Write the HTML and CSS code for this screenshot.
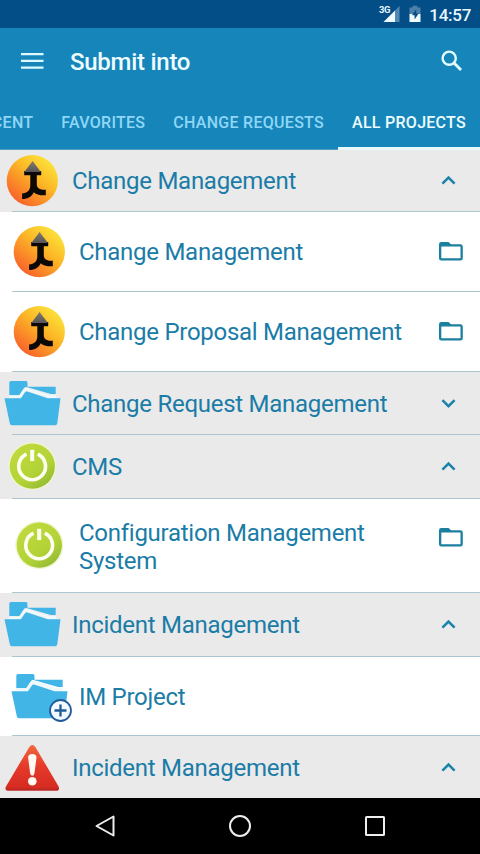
FILE: index.html
```html
<!DOCTYPE html>
<html lang="en">
<head>
<meta charset="utf-8">
<title>Submit into</title>
<link rel="stylesheet" href="styles.css">
</head>
<body>
<svg class="defs" width="0" height="0" aria-hidden="true">
  <defs>
    <linearGradient id="orange" x1=".85" y1=".1" x2=".2" y2=".9">
      <stop offset="0" stop-color="#fce33a"/><stop offset=".42" stop-color="#fcb826"/><stop offset="1" stop-color="#f8642a"/>
    </linearGradient>
    <linearGradient id="tip" x1="0" y1="0" x2="0" y2="1">
      <stop offset="0" stop-color="#85796a"/><stop offset="1" stop-color="#55565a"/>
    </linearGradient>
    <linearGradient id="green" x1=".2" y1=".1" x2=".8" y2=".9">
      <stop offset="0" stop-color="#bfd93d"/><stop offset=".65" stop-color="#b2d336"/><stop offset="1" stop-color="#97bd35"/>
    </linearGradient>
    <linearGradient id="red" x1="0" y1="0" x2="0" y2="1">
      <stop offset="0" stop-color="#f2683f"/><stop offset=".45" stop-color="#e63b2b"/><stop offset="1" stop-color="#d3291f"/>
    </linearGradient>
    <symbol id="merge" viewBox="0 0 64 64">
      <circle cx="32.300" cy="31.700" r="25.600" fill="url(#orange)"/>
      <path d="M24.200 22h17v4.300h-4.400v9.200c0 3.700 3.500 5.500 9 5.200v5.600c-5.700.3-9.500-.5-12-3-2.200 4.500-5.500 6.600-11.700 6.800v-5.600c5.300-.5 8.200-3.100 8.200-8.200V26.300h-6.100z" fill="#0b0805"/>
      <path d="M32.600 12l8.300 11H24.300z" fill="url(#tip)"/>
    </symbol>
    <symbol id="folder" viewBox="0 0 64 64">
      <path d="M9.300 23.200V10.800q0-1.700 1.700-1.700h14.800q1.700 0 1.700 1.700v4H55.700v7.200L51 22 27.500 15.200q-2.400-.7-3.800 1.200l-4.500 6.800z" fill="#42b5e7"/>
      <path d="M9 24.700h11.200l4.300-6.400q1-1.500 2.600-1l22.500 7.200h6.500" fill="none" stroke="#eff8fa" stroke-width="2.800"/>
      <path d="M4.500 26.300h16.400l4.300-6.200q.7-1 2-.6l20.500 6.800h12.800l-3.200 24.900q-.3 2-2.200 2H12q-2 0-2.200-2z" fill="#42b5e7"/>
    </symbol>
    <symbol id="power" viewBox="0 0 64 64">
      <circle cx="32.300" cy="31.200" r="24" fill="#eff5cf"/>
      <circle cx="32.300" cy="31.200" r="22.600" fill="url(#green)"/>
      <path d="M26.500 19.200a13.400 13.400 0 1 0 11.300 0" fill="none" stroke="#fdfff1" stroke-width="3.600"/>
      <path d="M32.200 14.800v11.300" fill="none" stroke="#fdfff1" stroke-width="4"/>
    </symbol>
    <symbol id="warning" viewBox="0 0 64 64">
      <path d="M29.200 11.200q3.200-4.500 6.300 0L58.600 50.500q1.500 4-2.500 4H8.500q-4.500 0-2.500-4z" fill="url(#red)"/>
      <path d="M7 53.400h50.500" stroke="#ba2925" stroke-width="2" stroke-linecap="round"/>
      <path d="M28.100 21.500q0-3.600 4.200-3.600t4.200 3.600l-2 15.500q-.3 2.700-2.200 2.700T30.100 37z" fill="#fff8f3"/>
      <circle cx="32.300" cy="45.200" r="4.300" fill="#fff8f3"/>
    </symbol>
    <symbol id="up" viewBox="0 0 24 24"><path d="M6.400 14.600l6.100-6.100 6.100 6.100" fill="none" stroke="#1b82aa" stroke-width="2.500"/></symbol>
    <symbol id="down" viewBox="0 0 24 24"><path d="M6.400 8.100l6.100 6.100 6.100-6.100" fill="none" stroke="#1b82aa" stroke-width="2.500"/></symbol>
    <symbol id="outline" viewBox="0 0 24 24">
      <path d="M2.200 1.900h7.300l2.500 2.400h9.300q2.500 0 2.500 2.300v11.600q0 2.300-2.300 2.300H2.300Q0 20.500 0 18.200V4.200q0-2.300 2.200-2.300zM2.300 6.500v11.700h19.200V6.500z" fill="#1b7f9f" fill-rule="evenodd"/>
    </symbol>
  </defs>
</svg>
<div class="screen">
  <header class="header">
    <div class="status">
      <svg class="signal" width="22" height="18" viewBox="0 0 22 18">
        <path d="M20.500 2v16h-4.500V6.500z" fill="#5089b5"/>
        <path d="M4.500 18L16 6.500V18z" fill="#f0fbff"/>
        <text class="network" x="0" y="8.500">3G</text>
      </svg>
      <svg class="battery" width="12" height="18" viewBox="0 0 12 18">
        <path d="M.5 3.500h3V1.800h5v1.700h3V10H.500z" fill="#4b80aa"/>
        <path d="M.500 10h11v8H.500z" fill="#f0fbff"/>
        <path d="M7.200 5.200L3 11.300h2.600v4.300l4-6H7.200z" fill="#0a4b84"/>
      </svg>
      <span class="clock">14:57</span>
    </div>
    <div class="toolbar">
      <svg class="menu" width="23" height="18" viewBox="0 0 23 18"><path d="M0 2.200h22.500M0 8.900h22.500M0 15.600h22.500" stroke="#dcfaff" stroke-width="2.200"/></svg>
      <h1 class="title">Submit into</h1>
      <svg class="search" width="22" height="22" viewBox="0 0 22 22"><circle cx="8.200" cy="8.200" r="6.600" fill="none" stroke="#e2fcff" stroke-width="2.400"/><path d="M12.800 12.800l7.200 7.200" stroke="#e2fcff" stroke-width="2.900"/></svg>
    </div>
    <nav class="tabs">
      <span class="tab">RECENT</span>
      <span class="tab">FAVORITES</span>
      <span class="tab">CHANGE REQUESTS</span>
      <span class="tab active">ALL PROJECTS</span>
    </nav>
  </header>
  <main class="list">
    <div class="row group first"><svg class="icon"><use href="#merge"/></svg><span class="label">Change Management</span><svg class="chevron"><use href="#up"/></svg></div>
    <div class="row child"><svg class="icon"><use href="#merge"/></svg><span class="label">Change Management</span><svg class="open"><use href="#outline"/></svg></div>
    <div class="row child"><svg class="icon"><use href="#merge"/></svg><span class="label">Change Proposal Management</span><svg class="open"><use href="#outline"/></svg></div>
    <div class="row group"><svg class="icon"><use href="#folder"/></svg><span class="label">Change Request Management</span><svg class="chevron"><use href="#down"/></svg></div>
    <div class="row group late"><svg class="icon"><use href="#power"/></svg><span class="label">CMS</span><svg class="chevron"><use href="#up"/></svg></div>
    <div class="row child tall"><svg class="icon"><use href="#power"/></svg><span class="label">Configuration Management System</span><svg class="open"><use href="#outline"/></svg></div>
    <div class="row group late"><svg class="icon"><use href="#folder"/></svg><span class="label">Incident Management</span><svg class="chevron"><use href="#up"/></svg></div>
    <div class="row child short"><svg class="icon" viewBox="0 0 64 64"><use href="#folder"/><circle cx="53.500" cy="45.500" r="10.500" fill="#f2faff" stroke="#215c98" stroke-width="1.800"/><path d="M47.500 45.500h12M53.500 39.500v12" stroke="#215c98" stroke-width="2.300"/></svg><span class="label">IM Project</span></div>
    <div class="row group last"><svg class="icon"><use href="#warning"/></svg><span class="label">Incident Management</span><svg class="chevron"><use href="#up"/></svg></div>
  </main>
  <footer class="navbar">
    <svg width="30" height="30" viewBox="0 0 30 30"><path d="M23.500 5.500v19L6.500 15z"/></svg>
    <svg width="30" height="30" viewBox="0 0 30 30"><circle cx="15" cy="15" r="10"/></svg>
    <svg width="30" height="30" viewBox="0 0 30 30"><rect x="6" y="6" width="18" height="18" rx=".5"/></svg>
  </footer>
</div>
</body>
</html>
```

FILE: styles.css
```css
* { box-sizing: border-box; }
body { margin: 0; font-family: Roboto, "Liberation Sans", sans-serif; background: #fff; }
svg { display: block; flex: none; overflow: visible; }
.defs { position: absolute; }
.screen { width: 480px; height: 854px; display: flex; flex-direction: column; overflow: hidden; }

.header { height: 150px; flex: none; background: #1686ba; color: #eefcff; }
.status { height: 28px; background: #044e87; display: flex; justify-content: flex-end; padding: 4px 9px 0 0; }
.network { font-size: 9.500px; font-weight: 700; letter-spacing: -.5px; fill: #e5f5ff; }
.signal { margin-right: 8px; }
.battery { margin-right: 8px; }
.clock { font-size: 17px; font-weight: 500; line-height: 22px; letter-spacing: -.3px; color: #e8f8ff; }
.toolbar { height: 68px; display: flex; align-items: center; padding: 0 17px 0 21px; }
.menu { margin-top: -3px; }
.title { margin: 0 auto 0 26px; font-size: 24px; line-height: 28px; font-weight: 500; letter-spacing: -.27px; }
.search { margin-top: -3px; }
.tabs { height: 54px; display: flex; justify-content: flex-end; border-bottom: 1px solid #4f9fc5; }
.tab { flex: none; padding: 16px 14px 0; font-size: 16px; line-height: 21px; font-weight: 500; letter-spacing: .28px; color: #8fd6f7; white-space: nowrap; }
.tab.active { margin-bottom: -1px; color: #edfdff; border-bottom: 3px solid #e9f9ff; }

.list { flex: 1; min-height: 0; overflow: hidden; }
.row { position: relative; display: flex; align-items: center; color: #1a7ca7; }
.row::after { content: ""; position: absolute; left: 12px; right: 0; bottom: 0; height: 1px; background: #abc5d2; }
.group { height: 63px; background: #eaeaea; }
.group.first { height: 62px; }
.group.late { height: 64px; }
.child { height: 80px; padding-left: 7px; background: #fff; }
.child.tall { height: 94px; }
.child.short { height: 79px; }
.group.last { height: 62px; padding-top: 2px; }
.last::after { display: none; }
.icon { width: 64px; height: 64px; margin-right: 8px; }
.label { flex: 1; font-size: 24px; line-height: 28px; letter-spacing: -.27px; }
.tall .label { padding-top: 2px; }
.chevron { width: 24px; height: 24px; margin-right: 20px; }
.open { width: 24px; height: 24px; margin-right: 17px; }
.tall .open { align-self: flex-start; margin-top: 27px; }

.navbar { height: 56px; flex: none; background: #000; display: flex; justify-content: center; align-items: center; gap: 105px; }
.navbar svg { fill: none; stroke: #eee; stroke-width: 2; stroke-linejoin: round; }
```
